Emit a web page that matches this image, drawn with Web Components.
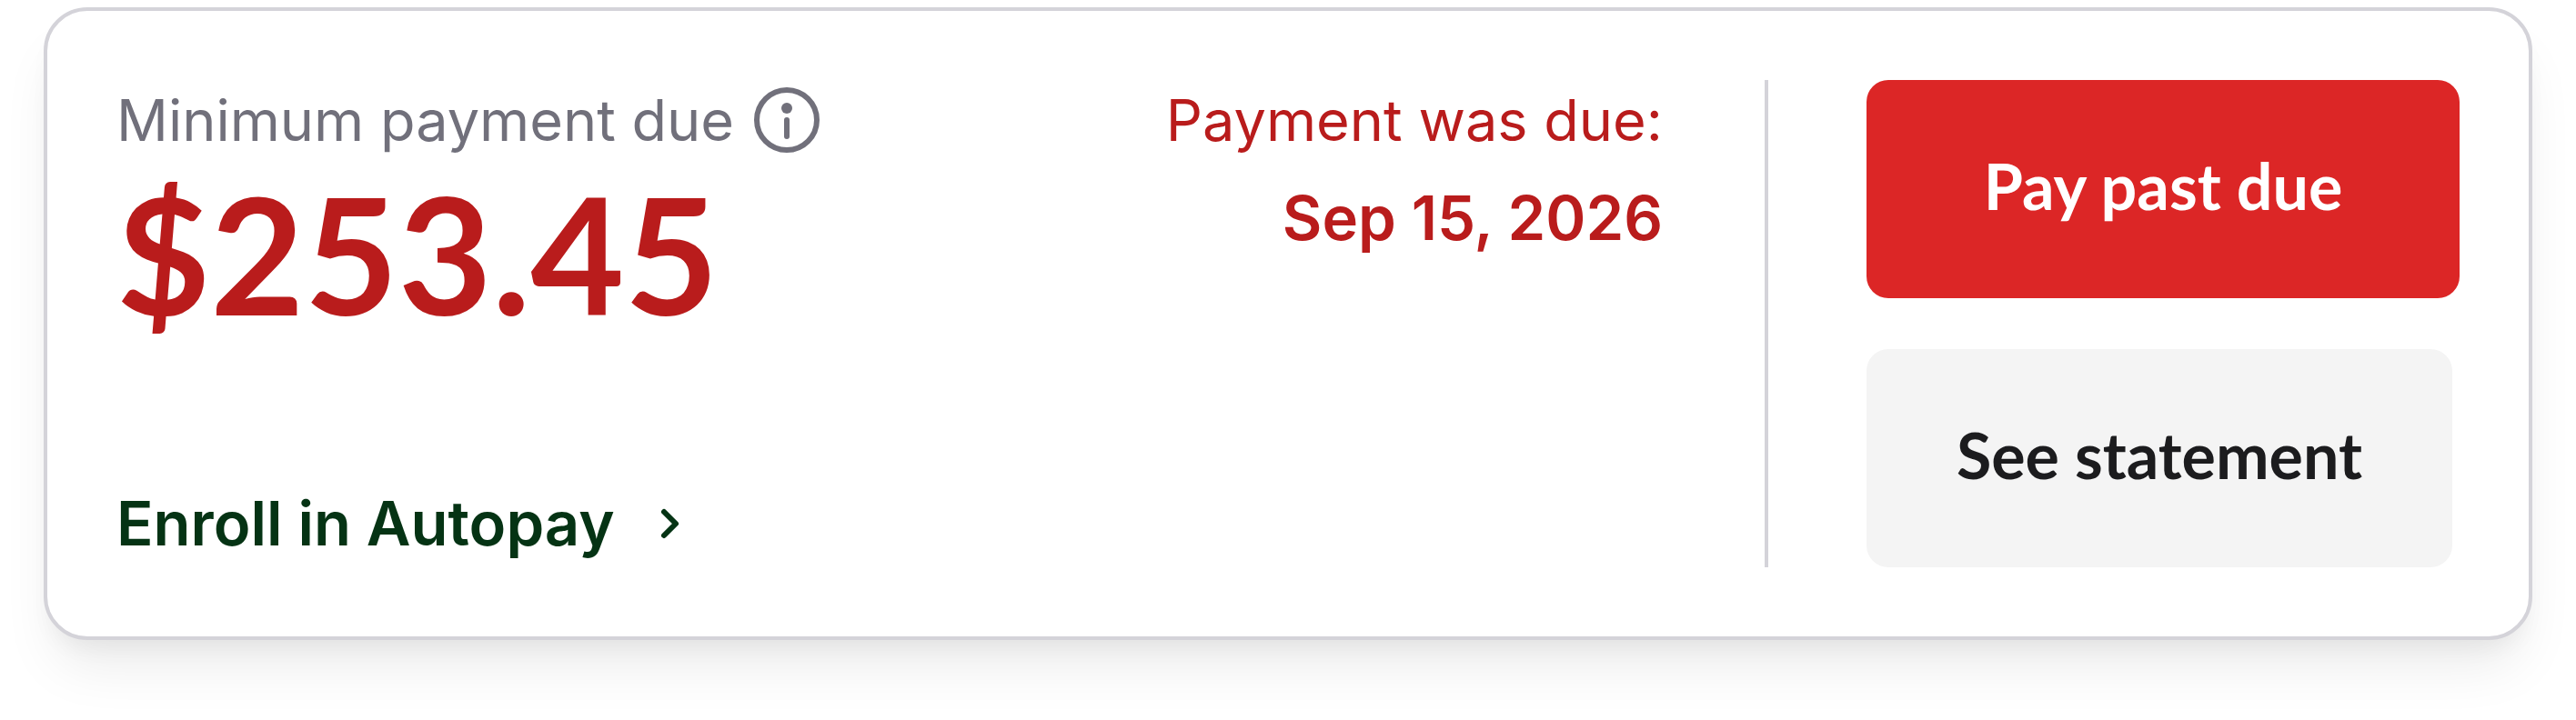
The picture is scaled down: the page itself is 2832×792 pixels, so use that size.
<!DOCTYPE html>
<html lang="en">
<head>
<meta charset="UTF-8">
<title>Payment due</title>
<style>
    body {
        box-sizing: border-box;
        min-height: 100vh;
        margin: 0;
        padding: 8px 48px 84px;
        background: #fff;
        font-family: Inter, sans-serif;
    }
</style>
</head>
<body>
<payment-card>
    <amount-due slot="amount" label="Minimum payment due">$253.45</amount-due>
    <due-date slot="date" label="Payment was due:">Sep 15, 2026</due-date>
    <autopay-link slot="autopay" href="#autopay">Enroll in Autopay</autopay-link>
    <action-button slot="actions" variant="danger">Pay past due</action-button>
    <action-button slot="actions">See statement</action-button>
</payment-card>

<script>
class PaymentCard extends HTMLElement {
    constructor() {
        super();
        this.attachShadow({ mode: 'open' });
    }

    connectedCallback() {
        this.shadowRoot.innerHTML = `
            <style>
                :host {
                    display: flex;
                    gap: 108px;
                    padding: 76px;
                    background: #fff;
                    border: 4px solid #d4d3d9;
                    border-radius: 48px;
                    box-shadow: 0 40px 60px -12px rgba(0, 0, 0, 0.08), 0 16px 24px -8px rgba(0, 0, 0, 0.05);
                }

                .details {
                    flex: 1;
                    display: flex;
                    flex-direction: column;
                    justify-content: space-between;
                    padding-right: 112px;
                    border-right: 4px solid #d4d3d9;
                }

                .summary {
                    display: flex;
                    justify-content: space-between;
                    align-items: flex-start;
                }

                .actions {
                    display: flex;
                    flex-direction: column;
                    align-items: flex-start;
                    gap: 56px;
                }
            </style>

            <div class="details">
                <div class="summary">
                    <slot name="amount"></slot>
                    <slot name="date"></slot>
                </div>
                <slot name="autopay"></slot>
            </div>
            <div class="actions"><slot name="actions"></slot></div>
        `;
    }
}

class AmountDue extends HTMLElement {
    constructor() {
        super();
        this.attachShadow({ mode: 'open' });
    }

    connectedCallback() {
        this.shadowRoot.innerHTML = `
            <style>
                :host {
                    display: block;
                }

                .label {
                    display: flex;
                    align-items: center;
                    gap: 20px;
                    font-size: 63px;
                    line-height: 88px;
                    color: #71707b;
                }

                .info {
                    display: flex;
                    padding: 0;
                    border: 0;
                    background: none;
                    color: inherit;
                    cursor: pointer;
                }

                .amount {
                    font-family: Lato, sans-serif;
                    font-size: 178px;
                    font-weight: 700;
                    line-height: 204px;
                    color: #b91c1c;
                }
            </style>

            <div class="label">
                <span>${this.getAttribute('label')}</span>
                <button class="info" type="button" aria-label="More information">
                    <svg width="76" height="76" viewBox="0 0 76 76" fill="none" aria-hidden="true">
                        <circle cx="38" cy="38" r="33" stroke="currentColor" stroke-width="6"/>
                        <circle cx="38" cy="25" r="6" fill="currentColor"/>
                        <path d="M38 38v18" stroke="currentColor" stroke-width="6" stroke-linecap="round"/>
                    </svg>
                </button>
            </div>
            <div class="amount"><slot></slot></div>
        `;
    }
}

class DueDate extends HTMLElement {
    constructor() {
        super();
        this.attachShadow({ mode: 'open' });
    }

    connectedCallback() {
        this.shadowRoot.innerHTML = `
            <style>
                :host {
                    display: flex;
                    flex-direction: column;
                    gap: 16px;
                    text-align: right;
                    color: #b91c1c;
                }

                .label {
                    font-size: 63px;
                    line-height: 88px;
                }

                .date {
                    font-size: 67px;
                    font-weight: 600;
                    line-height: 96px;
                }
            </style>

            <div class="label">${this.getAttribute('label')}</div>
            <div class="date"><slot></slot></div>
        `;
    }
}

class AutopayLink extends HTMLElement {
    constructor() {
        super();
        this.attachShadow({ mode: 'open' });
    }

    connectedCallback() {
        this.shadowRoot.innerHTML = `
            <style>
                :host {
                    display: flex;
                }

                a {
                    display: inline-flex;
                    align-items: center;
                    gap: 28px;
                    font-size: 67px;
                    font-weight: 600;
                    line-height: 96px;
                    color: #053314;
                    text-decoration: none;
                }
            </style>

            <a href="${this.getAttribute('href')}">
                <span><slot></slot></span>
                <svg width="64" height="64" viewBox="0 0 64 64" fill="none" aria-hidden="true">
                    <path d="M26 19l13 13-13 13" stroke="currentColor" stroke-width="6" stroke-linecap="round" stroke-linejoin="round"/>
                </svg>
            </a>
        `;
    }
}

class ActionButton extends HTMLElement {
    constructor() {
        super();
        this.attachShadow({ mode: 'open' });
    }

    connectedCallback() {
        this.shadowRoot.innerHTML = `
            <style>
                :host {
                    display: block;
                    width: 644px;
                }

                :host([variant="danger"]) {
                    width: 652px;
                }

                button {
                    width: 100%;
                    padding: 68px 0 76px;
                    border: 0;
                    border-radius: 24px;
                    background: #f4f4f4;
                    color: #1c1c1e;
                    font-family: Lato, sans-serif;
                    font-size: 70px;
                    font-weight: 700;
                    line-height: 96px;
                    cursor: pointer;
                }

                :host([variant="danger"]) button {
                    background: #dc2626;
                    color: #fff;
                }
            </style>

            <button type="button"><slot></slot></button>
        `;
    }
}

customElements.define('payment-card', PaymentCard);
customElements.define('amount-due', AmountDue);
customElements.define('due-date', DueDate);
customElements.define('autopay-link', AutopayLink);
customElements.define('action-button', ActionButton);
</script>
</body>
</html>
